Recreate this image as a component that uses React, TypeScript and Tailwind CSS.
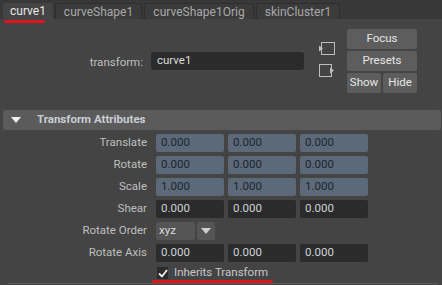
import React from 'react';

const Field: React.FC<{ value: string; blue?: boolean }> = ({ value, blue }) => (
  <div
    className={`w-[68px] h-[18px] rounded-[2px] pl-[5px] flex items-center text-[11.5px] ${
      blue ? 'bg-[#5b6978] text-[#1d2633]' : 'bg-[#2b2b2b] text-[#cdd3d9]'
    }`}
  >
    {value}
  </div>
);

const Row: React.FC<{ label: string; children: React.ReactNode }> = ({ label, children }) => (
  <div className="flex items-center h-[18px]">
    <div className="w-[147px] text-right text-[11.5px] text-[#bfbfbf]">{label}</div>
    <div className="ml-[9px] flex gap-[4px]">{children}</div>
  </div>
);

const TripleRow: React.FC<{ label: string; v: string; blue?: boolean }> = ({ label, v, blue }) => (
  <Row label={label}>
    <Field value={v} blue={blue} />
    <Field value={v} blue={blue} />
    <Field value={v} blue={blue} />
  </Row>
);

export default function App() {
  const tabs = ['curve1', 'curveShape1', 'curveShape1Orig', 'skinCluster1'];
  return (
    <div
      className="relative w-[442px] h-[285px] overflow-hidden bg-[#444444] select-none"
      style={{ fontFamily: 'Roboto, "Liberation Sans", sans-serif' }}
    >
      {/* tab bar */}
      <div className="h-[19px] bg-[#383838] flex items-end pl-[3px] gap-[2px]">
        {tabs.map((t, i) => (
          <div
            key={t}
            className={`h-[16px] rounded-t-[3px] flex items-center justify-center text-[12px] leading-none ${
              i === 0
                ? 'w-[50px] bg-[#444444] text-[#e8e8e8]'
                : 'bg-[#3b3b3b] border border-b-0 border-[#2e2e2e] text-[#a9a9a9]'
            } ${i === 1 ? 'w-[87px]' : i === 2 ? 'w-[110px]' : i === 3 ? 'w-[84px]' : ''}`}
          >
            {t}
          </div>
        ))}
      </div>
      <div className="absolute left-[4px] top-[20px] w-[41px] h-[3px] rounded-full bg-[#e0141b]" />

      {/* top section */}
      <div className="h-[91px] flex items-start pt-[10px]">
        <div className="w-[143px] mt-[25px] text-right text-[11.5px] text-[#bfbfbf]">transform:</div>
        <div className="ml-[8px] mt-[23px] w-[153px] h-[18px] rounded-[3px] bg-[#2b2b2b] pl-[6px] flex items-center text-[11.5px] text-[#dcdcdc]">
          curve1
        </div>
        <div className="ml-[15px] mt-[13px] w-[16px] flex flex-col gap-[9px]">
          <svg width="16" height="13" viewBox="0 0 16 13">
            <rect x="2.5" y="0.5" width="13" height="12" fill="none" stroke="#bdbdbd" />
            <path d="M0 3.5 L4 6.5 L0 9.5 Z" fill="#bdbdbd" />
          </svg>
          <svg width="16" height="13" viewBox="0 0 16 13">
            <rect x="0.5" y="0.5" width="12" height="12" fill="none" stroke="#bdbdbd" />
            <path d="M11 3.5 L15 6.5 L11 9.5 Z" fill="#bdbdbd" />
          </svg>
        </div>
        <div className="ml-[12px] w-[70px] flex flex-col gap-[2px]">
          <div className="h-[20px] rounded-[2px] bg-[#5d5d5d] flex items-center justify-center text-[11.5px] text-[#e6e6e6]">Focus</div>
          <div className="h-[20px] rounded-[2px] bg-[#5d5d5d] flex items-center justify-center text-[11.5px] text-[#e6e6e6]">Presets</div>
          <div className="flex gap-[2px]">
            <div className="w-[34px] h-[20px] rounded-[2px] bg-[#5d5d5d] flex items-center justify-center text-[11.5px] text-[#e6e6e6]">Show</div>
            <div className="w-[34px] h-[20px] rounded-[2px] bg-[#5d5d5d] flex items-center justify-center text-[11.5px] text-[#e6e6e6]">Hide</div>
          </div>
        </div>
      </div>

      {/* frame header */}
      <div className="ml-[3px] mr-[1px] h-[20px] rounded-[2px] bg-[#5b5b5b] flex items-center">
        <svg width="10" height="6" viewBox="0 0 10 6" className="ml-[8px]">
          <path d="M0 0 H10 L5 6 Z" fill="#f0f0f0" />
        </svg>
        <span className="ml-[16px] text-[11.5px] font-bold text-[#c9ced4]">Transform Attributes</span>
      </div>

      {/* attributes */}
      <div className="pt-[4px] flex flex-col gap-[4px]">
        <TripleRow label="Translate" v="0.000" blue />
        <TripleRow label="Rotate" v="0.000" blue />
        <TripleRow label="Scale" v="1.000" blue />
        <TripleRow label="Shear" v="0.000" />
        <Row label="Rotate Order">
          <div className="flex gap-[2px]">
            <div className="w-[39px] h-[18px] rounded-[2px] bg-[#555555] pl-[3px] flex items-center text-[11.5px] text-[#dcdcdc]">xyz</div>
            <div className="w-[18px] h-[18px] rounded-[2px] bg-[#555555] flex items-center justify-center">
              <svg width="10" height="6" viewBox="0 0 10 6">
                <path d="M0 0 H10 L5 6 Z" fill="#cfcfcf" />
              </svg>
            </div>
          </div>
        </Row>
        <TripleRow label="Rotate Axis" v="0.000" />
      </div>
      <div className="mt-[5px] ml-[157px] flex items-center h-[12px]">
        <div className="w-[11px] h-[12px] bg-[#2b2b2b] flex items-center justify-center">
          <svg width="10" height="9" viewBox="0 0 10 9">
            <path d="M1 4.5 L4 7.5 L9 1" fill="none" stroke="#f2f2f2" strokeWidth="1.8" />
          </svg>
        </div>
        <span className="ml-[6px] text-[11.5px] text-[#c8c8c8]">Inherits Transform</span>
      </div>
      <div className="absolute left-[152px] top-[280px] w-[121px] h-[3px] rounded-full bg-[#e0141b]" />
      <div className="absolute left-[8px] right-[4px] top-[283px] h-px bg-[#5a5a5a]" />
    </div>
  );
}
